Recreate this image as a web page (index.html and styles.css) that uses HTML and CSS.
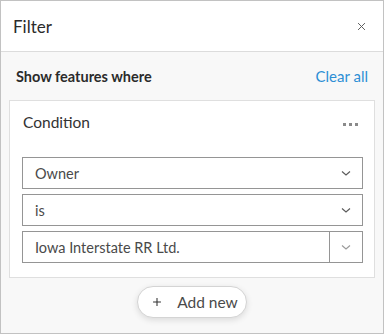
FILE: index.html
```html
<!DOCTYPE html>
<html lang="en">
<head>
  <meta charset="UTF-8">
  <title>Filter</title>
  <link rel="stylesheet" href="styles.css">
</head>
<body>
  <div class="panel">
    <div class="panel-header">
      <span class="panel-title">Filter</span>
      <button class="icon-btn close-btn" aria-label="Close">
        <svg viewBox="0 0 16 16"><path d="M3 3l10 10M13 3L3 13"/></svg>
      </button>
    </div>

    <div class="panel-body">
      <div class="where-row">
        <span class="where-label">Show features where</span>
        <a href="#" class="clear-link">Clear all</a>
      </div>

      <div class="card">
        <div class="card-head">
          <span class="card-title">Condition</span>
          <span class="dots"><i></i><i></i><i></i></span>
        </div>
        <div class="fields">
          <div class="select">
            <span>Owner</span>
            <svg class="chev" viewBox="0 0 12 12"><path d="M2 4.5l4 3.5 4-3.5"/></svg>
          </div>
          <div class="select">
            <span>is</span>
            <svg class="chev" viewBox="0 0 12 12"><path d="M2 4.5l4 3.5 4-3.5"/></svg>
          </div>
          <div class="select combo">
            <span class="combo-value">Iowa Interstate RR Ltd.</span>
            <span class="combo-btn">
              <svg class="chev" viewBox="0 0 12 12"><path d="M2 4.5l4 3.5 4-3.5"/></svg>
            </span>
          </div>
        </div>
      </div>

      <div class="add-row">
        <button class="add-btn">
          <svg viewBox="0 0 16 16"><path d="M8 3.5v9M3.5 8h9"/></svg>
          Add new
        </button>
      </div>
    </div>
  </div>
</body>
</html>
```

FILE: styles.css
```css
body {
  margin: 0;
  font-family: Lato, 'Open Sans', sans-serif;
  color: #323232;
  background: #fff;
}

.panel {
  width: 382px;
  height: 332px;
  border: 1px solid #c2c2c2;
  background: #f8f8f8;
  display: flex;
  flex-direction: column;
}

.panel-header {
  height: 50px;
  background: #fff;
  border-bottom: 1px solid #dcdcdc;
  display: flex;
  align-items: center;
  justify-content: space-between;
  padding: 0 16px 0 12px;
}

.panel-title {
  font-size: 17px;
  color: #2b2b2b;
}

.icon-btn {
  border: none;
  background: none;
  padding: 0;
  cursor: pointer;
}

.close-btn {
  width: 11px;
  height: 11px;
  display: flex;
}

.close-btn svg {
  width: 11px;
  height: 11px;
  fill: none;
  stroke: #5a5a5a;
  stroke-width: 1.4;
}

.panel-body {
  padding: 0 8px;
}

.where-row {
  height: 48px;
  display: flex;
  align-items: center;
  justify-content: space-between;
  padding: 0 7px 0 7px;
}

.where-label {
  font-size: 14.5px;
  font-weight: 700;
  color: #2b2b2b;
}

.clear-link {
  font-size: 15px;
  color: #2d8fd5;
  text-decoration: none;
}

.card {
  background: #fff;
  border: 1px solid #dfdfdf;
  padding: 0 11px 14px 12px;
}

.card-head {
  height: 45px;
  display: flex;
  align-items: center;
  justify-content: space-between;
  padding: 0 5px 0 1px;
}

.card-title {
  font-size: 15.5px;
  margin-top: -3px;
}

.dots {
  display: flex;
  gap: 3px;
  margin-top: 2px;
}

.dots i {
  width: 3px;
  height: 3px;
  background: #8a8a8a;
}

.fields {
  margin-top: 11px;
  display: flex;
  flex-direction: column;
  gap: 5px;
}

.select {
  height: 30px;
  border: 1px solid #959595;
  display: flex;
  align-items: center;
  justify-content: space-between;
  padding: 0 10px 0 12px;
  font-size: 14.5px;
  color: #4a4a4a;
}

.chev {
  width: 12px;
  height: 12px;
  fill: none;
  stroke: #5a5a5a;
  stroke-width: 1.1;
}

.select.combo {
  padding: 0 0 0 12px;
}

.combo-btn {
  width: 32px;
  height: 30px;
  border-left: 1px solid #959595;
  display: flex;
  align-items: center;
  justify-content: center;
}

.combo-btn .chev {
  stroke: #9a9a9a;
}

.add-row {
  display: flex;
  justify-content: center;
  margin-top: 8px;
}

.add-btn {
  height: 32px;
  width: 110px;
  border: 1px solid #d4d4d4;
  border-radius: 16px;
  background: #fff;
  box-shadow: 0 2px 6px rgba(0, 0, 0, 0.12);
  font-family: inherit;
  font-size: 15.5px;
  color: #4a4a4a;
  display: flex;
  align-items: center;
  justify-content: center;
  gap: 13px;
  padding: 0 8px 0 12px;
}

.add-btn svg {
  width: 14px;
  height: 14px;
  fill: none;
  stroke: #323232;
  stroke-width: 1.2;
}
```
